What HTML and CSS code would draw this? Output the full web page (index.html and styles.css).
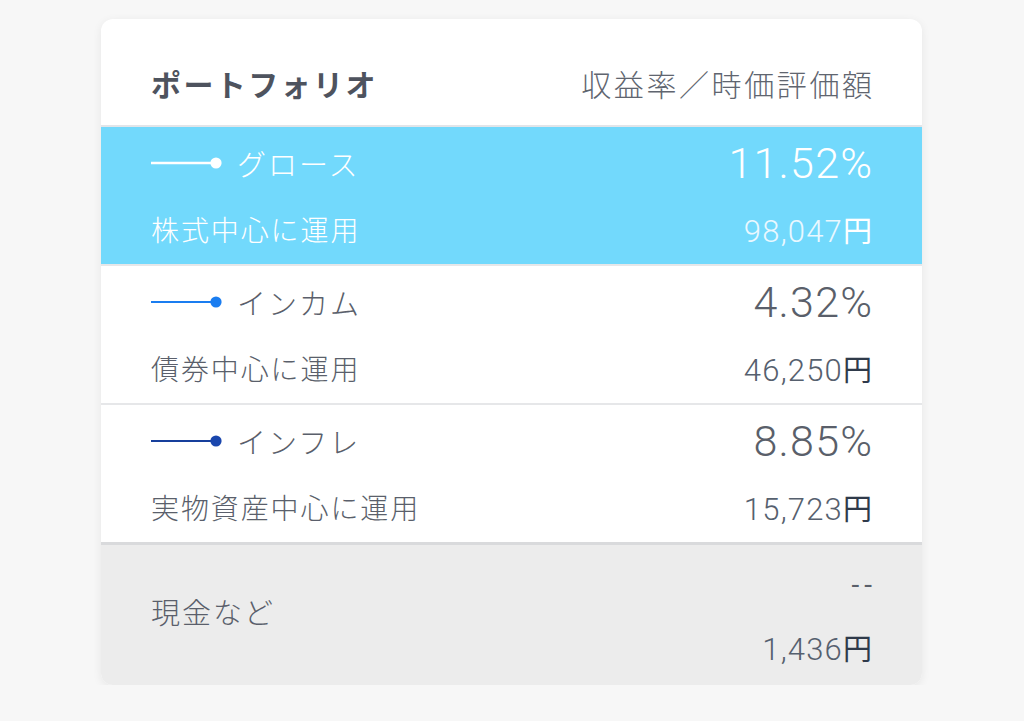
FILE: index.html
```html
<!DOCTYPE html>
<html lang="ja">
<head>
<meta charset="utf-8">
<title>ポートフォリオ</title>
<link rel="stylesheet" href="styles.css">
</head>
<body>
<div class="card">
  <div class="head">
    <div class="head-title">ポートフォリオ</div>
    <div class="head-sub">収益率／時価評価額</div>
  </div>
  <div class="row row-growth">
    <div class="name">
      <svg class="legend" width="72" height="14" viewBox="0 0 72 14"><line x1="0" y1="7" x2="62" y2="7" stroke="#ffffff" stroke-width="2.4"/><circle cx="65" cy="7" r="5.6" fill="#ffffff"/></svg>
      <span>グロース</span>
    </div>
    <div class="pct">11.52%</div>
    <div class="desc">株式中心に運用</div>
    <div class="amt">98,047<span class="yen">円</span></div>
  </div>
  <div class="row">
    <div class="name">
      <svg class="legend" width="72" height="14" viewBox="0 0 72 14"><line x1="0" y1="7" x2="62" y2="7" stroke="#1a7df0" stroke-width="2.2"/><circle cx="65" cy="7" r="5.6" fill="#1a7df0"/></svg>
      <span>インカム</span>
    </div>
    <div class="pct">4.32%</div>
    <div class="desc">債券中心に運用</div>
    <div class="amt">46,250<span class="yen">円</span></div>
  </div>
  <div class="row row-last">
    <div class="name">
      <svg class="legend" width="72" height="14" viewBox="0 0 72 14"><line x1="0" y1="7" x2="62" y2="7" stroke="#173f9c" stroke-width="2.2"/><circle cx="65" cy="7" r="5.6" fill="#1a46ad"/></svg>
      <span>インフレ</span>
    </div>
    <div class="pct">8.85%</div>
    <div class="desc">実物資産中心に運用</div>
    <div class="amt">15,723<span class="yen">円</span></div>
  </div>
  <div class="cash">
    <div class="cash-name">現金など</div>
    <div class="cash-vals">
      <div class="dash">--</div>
      <div class="amt">1,436<span class="yen">円</span></div>
    </div>
  </div>
</div>
</body>
</html>
```

FILE: styles.css
```css
html, body {
  margin: 0;
  padding: 0;
  background: #f7f7f7;
}
body {
  padding: 19px 0 0 101px;
  font-family: "Noto Sans CJK JP", "Noto Sans", sans-serif;
  color: #5a5f6b;
}
.card {
  width: 821px;
  background: #ffffff;
  border-radius: 12px;
  box-shadow: 0 2px 10px rgba(0, 0, 0, 0.07);
  overflow: hidden;
}
.head {
  height: 108px;
  box-sizing: border-box;
  padding: 0 50px 24px;
  display: flex;
  justify-content: space-between;
  align-items: flex-end;
  border-bottom: 2px solid #e2e5e9;
}
.head-title {
  font-size: 30px;
  line-height: 36px;
  font-weight: 700;
  color: #4e535e;
  letter-spacing: 2.4px;
}
.head-sub {
  font-size: 30px;
  line-height: 36px;
  font-weight: 300;
  color: #60656f;
  letter-spacing: 2.6px;
  margin-right: -2.6px;
}
.row {
  display: grid;
  grid-template-columns: 1fr auto;
  grid-template-rows: 36px 36px;
  row-gap: 30px;
  padding: 18px 50px 17px;
  border-bottom: 2px solid #e6e7e9;
  align-items: center;
}
.row-last {
  border-bottom: 3px solid #d9dadc;
}
.row-growth {
  background: #72d9fc;
  color: #ffffff;
}
.name {
  display: flex;
  align-items: center;
  font-size: 29px;
  font-weight: 300;
  letter-spacing: 2px;
}
.legend {
  margin-right: 14px;
  flex: none;
}
.desc {
  font-size: 28px;
  font-weight: 300;
  letter-spacing: 1.9px;
}
.pct {
  justify-self: end;
  font-family: "Roboto", "Liberation Sans", sans-serif;
  font-weight: 300;
  font-size: 43px;
  line-height: 36px;
  letter-spacing: 1.2px;
  margin-right: -1.2px;
  color: #5a5f6a;
}
.row-growth .pct, .row-growth .amt, .row-growth .yen {
  color: #ffffff;
}
.amt {
  justify-self: end;
  font-family: "Roboto", "Liberation Sans", sans-serif;
  font-weight: 300;
  font-size: 31px;
  color: #56606e;
  letter-spacing: 1.2px;
}
.yen {
  font-family: "Noto Sans CJK JP", sans-serif;
  font-size: 29px;
  font-weight: 400;
  color: #2f3a4a;
  letter-spacing: 0;
}
.row-growth .amt {
  color: #eaf8ff;
}
.cash {
  background: #ececec;
  height: 140px;
  box-sizing: border-box;
  padding: 0 50px;
  display: flex;
  justify-content: space-between;
  align-items: center;
}
.cash-name {
  font-size: 29px;
  font-weight: 300;
  letter-spacing: 2px;
  margin-top: -8px;
}
.cash-vals {
  display: flex;
  flex-direction: column;
  align-items: flex-end;
  gap: 26px;
  padding-top: 4px;
}
.dash {
  font-family: "Roboto", "Liberation Sans", sans-serif;
  font-size: 28px;
  line-height: 36px;
  letter-spacing: 5px;
  margin-right: -5px;
  color: #5a5f6a;
}
.cash .amt {
  line-height: 36px;
}
```
